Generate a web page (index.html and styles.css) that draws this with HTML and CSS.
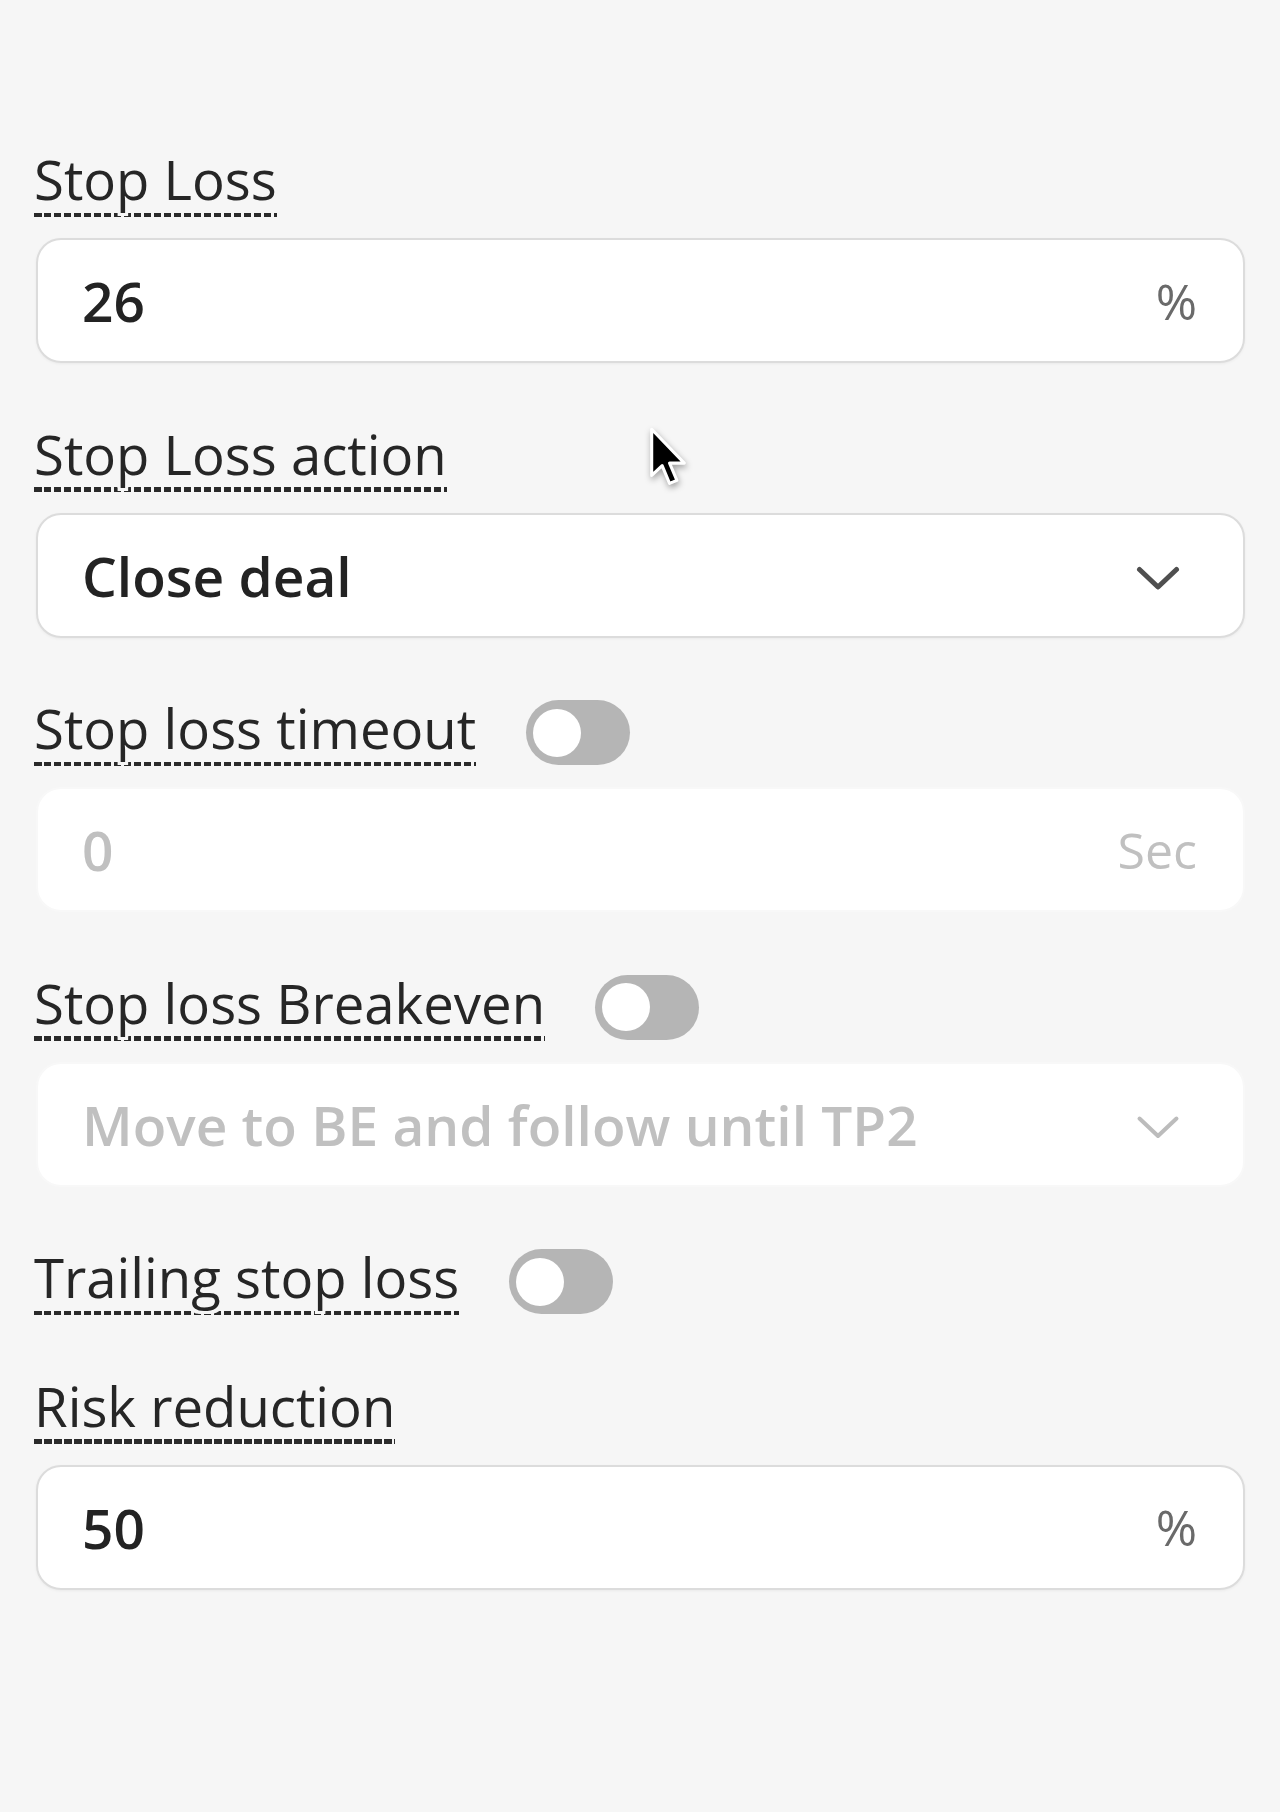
FILE: index.html
```html
<!DOCTYPE html>
<html lang="en">
<head>
<meta charset="utf-8">
<title>Stop Loss settings</title>
<link rel="stylesheet" href="styles.css">
</head>
<body>
<div class="panel">
  <div class="field">
    <div class="label-row"><span class="label">Stop Loss</span></div>
    <div class="box"><span class="value">26</span><span class="unit">%</span></div>
  </div>

  <div class="field">
    <div class="label-row"><span class="label">Stop Loss action</span></div>
    <div class="box"><span class="value">Close deal</span>
      <svg class="chevron" viewBox="0 0 44 25" width="44" height="25"><path d="M3.5 3.5 L22 21 L40.5 3.5" fill="none" stroke="currentColor" stroke-width="5" stroke-linecap="round" stroke-linejoin="round"/></svg>
    </div>
  </div>

  <div class="field">
    <div class="label-row"><span class="label">Stop loss timeout</span><span class="toggle"><span class="knob"></span></span></div>
    <div class="box disabled"><span class="value">0</span><span class="unit">Sec</span></div>
  </div>

  <div class="field">
    <div class="label-row"><span class="label">Stop loss Breakeven</span><span class="toggle"><span class="knob"></span></span></div>
    <div class="box disabled"><span class="value">Move to BE and follow until TP2</span>
      <svg class="chevron" viewBox="0 0 44 25" width="44" height="25"><path d="M3.5 3.5 L22 21 L40.5 3.5" fill="none" stroke="currentColor" stroke-width="4" stroke-linecap="round" stroke-linejoin="round"/></svg>
    </div>
  </div>

  <div class="field">
    <div class="label-row"><span class="label">Trailing stop loss</span><span class="toggle"><span class="knob"></span></span></div>
  </div>

  <div class="field">
    <div class="label-row"><span class="label">Risk reduction</span></div>
    <div class="box"><span class="value">50</span><span class="unit">%</span></div>
  </div>
</div>

<svg class="cursor" viewBox="0 0 13 21" width="40" height="65">
  <path d="M1.2 1 L1.2 16 L4.6 12.8 L7 18.6 L9.4 17.6 L7 12 L11.8 12 Z" fill="#000" stroke="#fff" stroke-width="1" stroke-linejoin="round"/>
</svg>
</body>
</html>
```

FILE: styles.css
```css
html, body {
  margin: 0;
  padding: 0;
}

body {
  background: #f6f6f6;
  font-family: "Open Sans", "Noto Sans", "DejaVu Sans", sans-serif;
  color: #2a2a2a;
  position: relative;
  min-height: 1812px;
}

.panel {
  display: flex;
  flex-direction: column;
  gap: 53.5px;
  padding: 142px 35px 0 36px;
}

.field {
  display: flex;
  flex-direction: column;
  gap: 21px;
}

.label-row {
  display: flex;
  align-items: center;
  gap: 50px;
}

.label {
  position: relative;
  margin-left: -2px;
  font-size: 54.5px;
  line-height: 75px;
  font-weight: 400;
  color: #262626;
  text-shadow: 3px 0 0 #f6f6f6, -3px 0 0 #f6f6f6, 0 3px 0 #f6f6f6, 3px 3px 0 #f6f6f6, -3px 3px 0 #f6f6f6;
}

.label::after {
  content: "";
  position: absolute;
  left: 0;
  right: 0;
  bottom: 0;
  height: 4.5px;
  z-index: -1;
  background: repeating-linear-gradient(90deg, #2a2a2a 0 7.5px, transparent 7.5px 10px);
}

.toggle {
  align-self: flex-end;
  margin-bottom: 1px;
  display: flex;
  align-items: center;
  width: 104px;
  height: 65px;
  border-radius: 33px;
  background: #b5b5b5;
  box-sizing: border-box;
  padding-left: 7px;
}

.knob {
  width: 48px;
  height: 48px;
  border-radius: 50%;
  background: #fff;
}

.box {
  height: 125px;
  box-sizing: border-box;
  border: 2px solid #dcdcdc;
  border-radius: 25px;
  background: #fff;
  box-shadow: 0 1px 3px rgba(0, 0, 0, 0.05);
  display: flex;
  align-items: center;
  justify-content: space-between;
  padding: 0 46px 0 44px;
}

.value {
  font-size: 55px;
  font-weight: 600;
  color: #232323;
}

.unit {
  font-size: 50px;
  font-weight: 400;
  color: #6a6a6a;
}

.chevron {
  color: #4f4f4f;
  margin: 6px 17px 0 0;
}

.box.disabled {
  border-color: #f8f8f8;
  box-shadow: none;
}

.box.disabled .value,
.box.disabled .unit {
  color: #c0c0c0;
}

.box.disabled .chevron {
  color: #bcbcbc;
}

.cursor {
  position: absolute;
  left: 648px;
  top: 426px;
  filter: drop-shadow(1px 3px 3px rgba(0,0,0,0.35));
}
```
